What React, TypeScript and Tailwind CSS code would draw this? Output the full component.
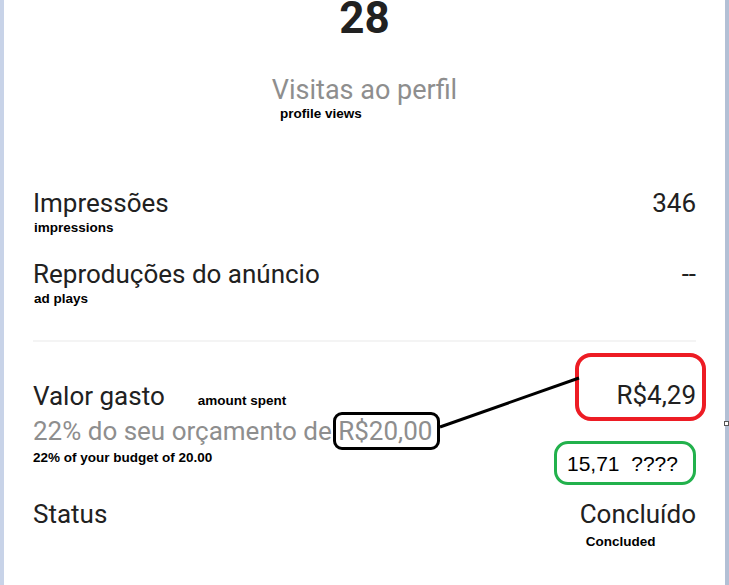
import React from 'react';

const roboto = "font-['Roboto','Liberation_Sans',sans-serif]";
const note = "font-['Liberation_Sans',Arial,sans-serif] font-bold text-[13.5px] leading-[13px] text-black";

const Row: React.FC<{ label: string; value: string; hint: string; className?: string }> = ({ label, value, hint, className }) => (
  <div className={className}>
    <div className={`flex justify-between text-[26px] leading-[26px] text-[#212121] ${roboto}`}>
      <span>{label}</span>
      <span>{value}</span>
    </div>
    <p className={`${note} mt-[5px] pl-[1px]`}>{hint}</p>
  </div>
);

const App: React.FC = () => {
  return (
    <div className="relative flex h-[585px] w-[729px] overflow-hidden bg-white">
      <div className="w-[4px] shrink-0 bg-[#c8d3e8]" />

      <main className="w-[721px] shrink-0 pl-[29px] pr-[29px]">
        {/* headline metric */}
        <div className={`text-center ${roboto}`}>
          <h1 className="-mt-[4px] text-[44px] font-bold leading-[44px] text-[#212121]">28</h1>
          <p className="mt-[36px] text-[27px] leading-[28px] text-[#8e8e8e]">Visitas ao perfil</p>
        </div>
        <p className={`${note} mt-[3px] pl-[247px]`}>profile views</p>

        <Row className="mt-[70px]" label="Impressões" value="346" hint="impressions" />
        <Row className="mt-[27px]" label="Reproduções do anúncio" value="--" hint="ad plays" />

        <div className="mt-[35px] h-[2px] bg-[#f4f4f4]" />

        {/* spend */}
        <section className="mt-[11px] flex justify-between">
          <div className="pt-[30px]">
            <div className="flex items-baseline">
              <span className={`text-[26px] leading-[26px] text-[#212121] ${roboto}`}>Valor gasto</span>
              <span className={`${note} ml-[33px]`}>amount spent</span>
            </div>
            <p className={`mt-[9px] text-[26px] leading-[26px] text-[#8e8e8e] ${roboto}`}>
              22% do seu orçamento de{' '}
              <span className="relative">
                R$20,00
                <span className="absolute -bottom-[4px] -left-[5px] -right-[8px] -top-[4px] rounded-[9px] border-[3px] border-black" />
              </span>
            </p>
            <p className={`${note} mt-[7px]`}>22% of your budget of 20.00</p>
          </div>

          <div className="flex flex-col items-end">
            <div className="-mr-[10px] flex h-[68px] w-[131px] items-end justify-end rounded-[16px] border-4 border-[#ed1c24] pb-[9px] pr-[6px]">
              <span className={`text-[26px] leading-[26px] text-[#212121] ${roboto}`}>R$4,29</span>
            </div>
            <div className="mt-[20px] flex h-[44px] w-[142px] items-center rounded-[14px] border-[3px] border-[#22b14c] pl-[10px]">
              <span className="whitespace-pre font-['Liberation_Sans',Arial,sans-serif] text-[21px] leading-[21px] text-black">15,71  ????</span>
            </div>
          </div>
        </section>

        {/* status */}
        <div className="mt-[16px] flex justify-between">
          <span className={`text-[26px] leading-[26px] text-[#212121] ${roboto}`}>Status</span>
          <div>
            <span className={`block text-[26px] leading-[26px] text-[#212121] ${roboto}`}>Concluído</span>
            <p className={`${note} mt-[8px] pl-[6px]`}>Concluded</p>
          </div>
        </div>
      </main>

      <div className="w-[4px] shrink-0 bg-[#b3c0d5]">
        <div className="-ml-[1px] mt-[421px] h-[5px] w-[5px] border border-[#555] bg-white" />
      </div>

      <svg className="pointer-events-none absolute inset-0" width="729" height="585">
        <line x1="440" y1="427" x2="579" y2="378" stroke="black" strokeWidth="3" />
      </svg>
    </div>
  );
};

export default App;
